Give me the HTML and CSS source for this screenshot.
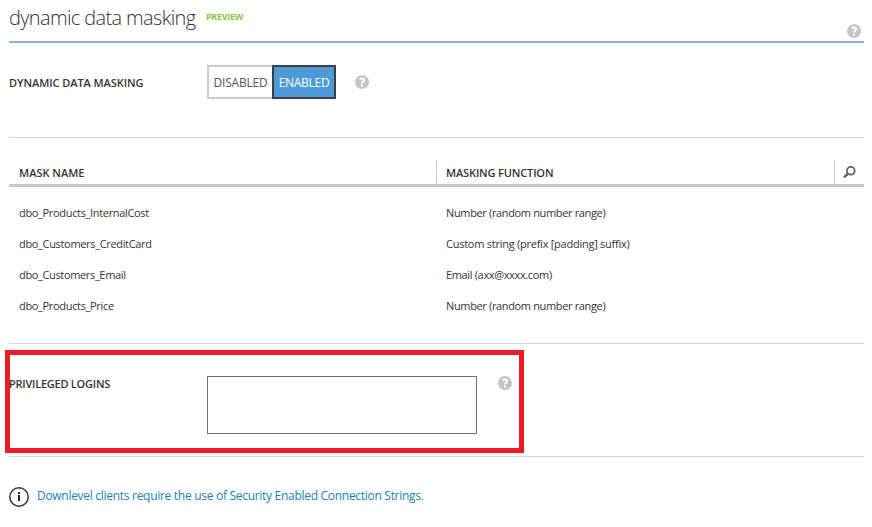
FILE: index.html
```html
<!DOCTYPE html>
<html lang="en">
<head>
<meta charset="utf-8">
<title>dynamic data masking</title>
<link rel="stylesheet" href="styles.css">
</head>
<body>
<svg class="defs" aria-hidden="true">
  <symbol id="help" viewBox="0 0 14 14">
    <circle cx="7" cy="7" r="7" fill="#c5c5c5"/>
    <path d="M4.7 4.4C5.6 3 9.2 2.9 9.2 5C9.2 6.6 7 6.5 7 8.6" fill="none" stroke="#fff" stroke-width="2"/>
    <rect x="6" y="9.6" width="2" height="2" fill="#fff"/>
  </symbol>
</svg>
<main class="page">
  <header class="header">
    <h1 class="title"><span class="t-title">dynamic data masking</span></h1>
    <span class="preview">PREVIEW</span>
    <svg class="help help-top"><use href="#help"/></svg>
  </header>
  <section class="setting">
    <span class="label t-ddm">DYNAMIC DATA MASKING</span>
    <div class="toggle">
      <button class="option off"><span class="t-off">DISABLED</span></button>
      <button class="option on"><span class="t-on">ENABLED</span></button>
    </div>
    <svg class="help help-toggle"><use href="#help"/></svg>
  </section>
  <section class="rules">
    <div class="row head">
      <div class="cell"><span class="t-mn">MASK NAME</span></div>
      <div class="cell"><span class="t-mf">MASKING FUNCTION</span></div>
      <div class="cell search">
        <svg width="13" height="13" viewBox="0 0 13 13" fill="none" stroke="#5c6064"><circle cx="7.8" cy="4.8" r="3.9" stroke-width="1.8"/><path d="M5 7.6L1 11.4" stroke-width="2.5"/></svg>
      </div>
    </div>
    <div class="body">
      <div class="row"><div class="cell"><span class="t-r1">dbo_Products_InternalCost</span></div><div class="cell"><span class="t-num">Number (random number range)</span></div></div>
      <div class="row"><div class="cell"><span class="t-r2">dbo_Customers_CreditCard</span></div><div class="cell"><span class="t-cus">Custom string (prefix [padding] suffix)</span></div></div>
      <div class="row"><div class="cell"><span class="t-r3">dbo_Customers_Email</span></div><div class="cell"><span class="t-em">Email (axx@xxxx.com)</span></div></div>
      <div class="row"><div class="cell"><span class="t-r4">dbo_Products_Price</span></div><div class="cell"><span class="t-num">Number (random number range)</span></div></div>
    </div>
  </section>
  <section class="logins">
    <span class="label t-pl">PRIVILEGED LOGINS</span>
    <textarea class="input" aria-label="Privileged logins"></textarea>
    <svg class="help help-logins"><use href="#help"/></svg>
    <div class="highlight"></div>
  </section>
  <footer class="notice">
    <svg width="20" height="20" viewBox="0 0 20 20"><circle cx="10" cy="10" r="9.2" fill="none" stroke="#1d3a50" stroke-width="1.5"/><path d="M9 5h2v2H9zM9 8h2v6H9z" fill="#12283a"/></svg>
    <a class="link">Downlevel clients require the use of Security Enabled Connection Strings.</a>
  </footer>
</main>
</body>
</html>
```
FILE: styles.css
```css
* { box-sizing: border-box; }
body {
  margin: 0;
  background: #fff;
  color: #333;
  font: 11px/16px "Open Sans", "Noto Sans", sans-serif;
}
.defs { position: absolute; width: 0; height: 0; }
.page { width: 855px; margin-left: 9px; }
span, a { white-space: nowrap; }

.header {
  display: flex;
  height: 43px;
  border-bottom: 2px solid #86b7df;
}
.title {
  width: 197px;
  margin: 0;
  padding-top: 3px;
  font-size: 20px;
  line-height: 30px;
  font-weight: 300;
  color: #333;
}
.t-title { letter-spacing: -0.64px; }
.preview {
  padding-top: 9px;
  font-size: 9px;
  font-weight: 700;
  letter-spacing: -0.3px;
  color: #8cc63f;
}
.help { display: block; flex: none; width: 14px; height: 14px; }
.help-top { margin: 24px 3px 0 auto; }

.setting {
  display: flex;
  height: 95px;
  padding-top: 22px;
  border-bottom: 1px solid #d6d6d6;
}
.label { width: 198px; font-weight: 600; }
.setting .label { padding-top: 10px; }
.toggle { display: flex; width: 129px; height: 34px; }
.option {
  display: flex;
  align-items: center;
  justify-content: center;
  padding: 2px 0 0;
  height: 34px;
  font: 12px/16px "Open Sans", "Noto Sans", sans-serif;
}
.off { width: 65px; border: 2px solid #ccc; border-right: 0; background: #fff; color: #555; }
.on { width: 64px; border: 2px solid #404040; background: #4c9bd8; color: #fff; }
.help-toggle { margin: 10px 0 0 19px; }

.rules { padding-top: 22px; height: 206px; border-bottom: 1px solid #d6d6d6; }
.row { display: grid; grid-template-columns: 427px 1fr; height: 31px; align-items: center; }
.cell { padding-left: 10px; }
.row.head {
  grid-template-columns: 427px 398px 30px;
  height: 27px;
  border-bottom: 3px solid #cacaca;
  font-weight: 600;
}
.head .cell { height: 24px; padding-top: 5px; }
.head .cell + .cell { border-left: 1px solid #ccc; padding-left: 9px; }
.head .search.cell { padding: 6px 0 0 8px; }
.search svg { display: block; }
.body { padding-top: 10px; }

/* Tracking per text */
.t-ddm { letter-spacing: -0.07px; }
.t-off { letter-spacing: -0.22px; }
.t-on { letter-spacing: -0.3px; }
.t-mf { letter-spacing: -0.15px; }
.t-r1, .t-r2, .t-r4 { letter-spacing: -0.33px; }
.t-r3, .t-num, .t-em { letter-spacing: -0.35px; }
.t-cus { letter-spacing: -0.25px; }
.t-pl { letter-spacing: -0.24px; }

.logins {
  position: relative;
  display: flex;
  height: 113px;
  padding-top: 32px;
  border-bottom: 1px solid #d6d6d6;
}
.input { width: 270px; height: 58px; border: 1px solid #707070; resize: none; background: #fff; }
.help-logins { margin-left: 21px; }
.highlight {
  position: absolute;
  left: -4px;
  top: 6px;
  width: 519px;
  height: 103px;
  border: 5px solid #ed1c24;
}

.notice { display: flex; gap: 8px; padding-top: 30px; }
.link { color: #1b80b9; font-size: 12px; line-height: 18px; letter-spacing: -0.29px; }
```
